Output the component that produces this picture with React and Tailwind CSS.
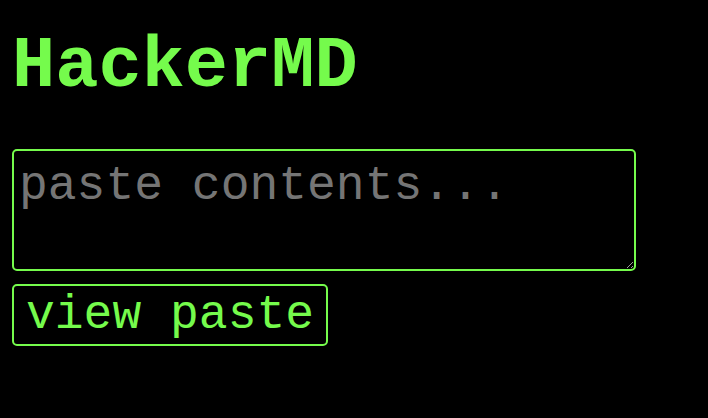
export default function App() {
  return (
    <div
      className="min-h-screen bg-black px-3 pt-[26px] text-[#75fb4c]"
      style={{ fontFamily: '"Liberation Mono", "Courier New", monospace' }}
    >
      <h1 className="text-[72px] font-bold leading-[1.15]">HackerMD</h1>
      <div className="mt-[40px] flex flex-col items-start">
        <textarea
          placeholder="paste contents..."
          className="block h-[122px] w-[624px] rounded-[5px] border-2 border-[#75fb4c] bg-black px-[5px] pt-[8px] pb-0 text-[48px] leading-[1.15] text-[#75fb4c] outline-none placeholder:text-[#757575]"
        />
        <button className="mt-[13px] h-[62px] rounded-[5px] border-2 border-[#75fb4c] bg-black px-[12px] text-[48px] font-normal leading-none text-[#75fb4c]">
          view paste
        </button>
      </div>
    </div>
  );
}
